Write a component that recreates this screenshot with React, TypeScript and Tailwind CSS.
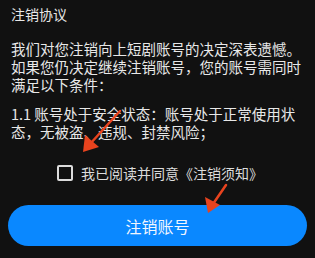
import React from "react";

export default function App() {
  return (
    <div
      className="relative w-[315px] h-[258px] overflow-hidden bg-[#111111] text-[#e8e8e8]"
      style={{ fontFamily: '"Noto Sans CJK SC", "Noto Sans", sans-serif' }}
    >
      <div className="px-[11px] pt-[5px]">
        <div className="text-[14px] leading-[18px]">注销协议</div>
        <p className="mt-[17px] text-[14.5px] leading-[18px]">
          我们对您注销向上短剧账号的决定深表遗憾。如果您仍决定继续注销账号，您的账号需同时满足以下条件：
        </p>
        <p className="mt-[11px] text-[14.5px] leading-[18px]">
          1.1 账号处于安全状态：账号处于正常使用状态，无被盗、违规、封禁风险；
        </p>
      </div>
      <div className="mt-[23px] flex items-center pl-[57px] gap-[8px]">
        <div className="w-[16px] h-[16px] rounded-[2px] border-2 border-[#dcdcdc]" />
        <span className="text-[14px] leading-[18px] text-[#dcdcdc]">我已阅读并同意《注销须知》</span>
      </div>
      <div className="mx-[8px] mt-[23px] h-[41px] rounded-full bg-[#0a88ff] flex items-center justify-center">
        <span className="text-[16px] text-[#f2f6ff]">注销账号</span>
      </div>
      <svg className="absolute inset-0 pointer-events-none" width="315" height="258" viewBox="0 0 315 258">
        <g stroke="#e8431e" strokeWidth="2.5" strokeLinecap="round" fill="#e8431e">
          <line x1="120" y1="111" x2="90" y2="144" />
          <polygon points="83,152 85,135 99,147" stroke="none" />
          <line x1="226" y1="185" x2="213" y2="204" />
          <polygon points="208,213 205,197 220,205" stroke="none" />
        </g>
      </svg>
    </div>
  );
}
